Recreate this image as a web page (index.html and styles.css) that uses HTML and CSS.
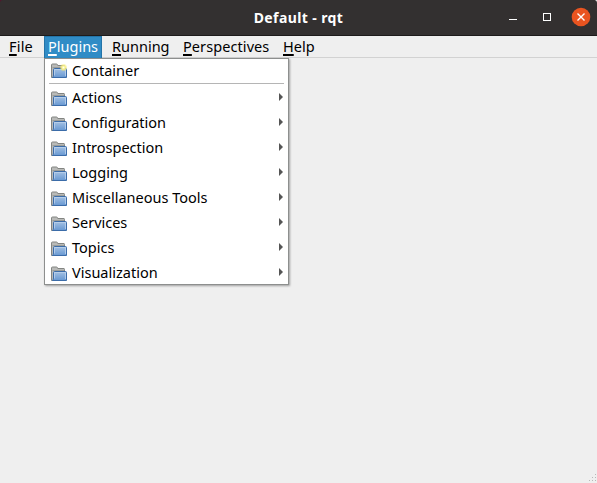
FILE: index.html
```
<!DOCTYPE html>
<html lang="en">
<head>
<meta charset="utf-8">
<title>Default - rqt</title>
<link rel="stylesheet" href="styles.css">
</head>
<body>
<svg class="defs" width="0" height="0" aria-hidden="true">
  <defs>
    <linearGradient id="blue" x1="0" y1="0" x2="0" y2="1"><stop offset="0" stop-color="#a6c2e3"/><stop offset="1" stop-color="#6798d2"/></linearGradient>
    <radialGradient id="glow"><stop offset="0" stop-color="#fffff0"/><stop offset=".45" stop-color="#f6ee86"/><stop offset="1" stop-color="#f4e660" stop-opacity="0"/></radialGradient>
    <symbol id="folder" viewBox="0 0 16 16">
      <path d="M.5 14.500V2Q.5 1 1.500 1H5.500Q6.500 1 6.700 2.500H13Q13.500 2.500 13.500 3.500V14.500Z" fill="#b9bab8" stroke="#838582"/>
      <path d="M1.500 4.500H13" stroke="#9a9c98"/>
      <path d="M3.500 5.500H14.500Q15.500 5.500 15.500 6.500V14.500H1.500Q2.500 13.500 2.500 12V6.500Q2.500 5.500 3.500 5.500Z" fill="url(#blue)" stroke="#3b6ca9"/>
      <path d="M3.500 12.500V6.500H14.500V13" fill="none" stroke="#bcd2ec" stroke-opacity=".8"/>
    </symbol>
    <symbol id="arrow" viewBox="0 0 4 8"><path d="M0 0L4 4L0 8Z" fill="#555"/></symbol>
  </defs>
</svg>
<div class="window">
  <header class="titlebar">
    <h1 class="title">Default - rqt</h1>
    <svg class="controls" width="97" height="35" viewBox="0 0 97 35">
      <path d="M12 19.500H20" stroke="#fff"/>
      <rect x="46.500" y="13.500" width="7" height="7" fill="none" stroke="#fff"/>
      <circle cx="84" cy="17" r="9.300" fill="#e95420"/>
      <path d="M80.500 13.500L87.500 20.500M87.500 13.500L80.500 20.500" stroke="#fff" stroke-width="1.400"/>
    </svg>
  </header>
  <nav class="menubar">
    <span class="top file"><u>F</u>ile</span>
    <span class="top plugins"><u>P</u>lugins</span>
    <span class="top running"><u>R</u>unning</span>
    <span class="top perspectives"><u>P</u>erspectives</span>
    <span class="top help"><u>H</u>elp</span>
  </nav>
  <div class="menu">
    <div class="item first"><svg class="icon"><use href="#folder"/><circle cx="12.500" cy="4.500" r="4" fill="url(#glow)"/></svg><span>Container</span></div>
    <hr class="separator">
    <div class="item"><svg class="icon"><use href="#folder"/></svg><span>Actions</span><svg class="arrow"><use href="#arrow"/></svg></div>
    <div class="item"><svg class="icon"><use href="#folder"/></svg><span>Configuration</span><svg class="arrow"><use href="#arrow"/></svg></div>
    <div class="item"><svg class="icon"><use href="#folder"/></svg><span>Introspection</span><svg class="arrow"><use href="#arrow"/></svg></div>
    <div class="item"><svg class="icon"><use href="#folder"/></svg><span>Logging</span><svg class="arrow"><use href="#arrow"/></svg></div>
    <div class="item"><svg class="icon"><use href="#folder"/></svg><span>Miscellaneous Tools</span><svg class="arrow"><use href="#arrow"/></svg></div>
    <div class="item"><svg class="icon"><use href="#folder"/></svg><span>Services</span><svg class="arrow"><use href="#arrow"/></svg></div>
    <div class="item"><svg class="icon"><use href="#folder"/></svg><span>Topics</span><svg class="arrow"><use href="#arrow"/></svg></div>
    <div class="item"><svg class="icon"><use href="#folder"/></svg><span>Visualization</span><svg class="arrow"><use href="#arrow"/></svg></div>
  </div>
  <svg class="grip" width="9" height="9" fill="#b8b8b8"><path d="M7 0h1v1h-1zM4 3h1v1h-1zM7 3h1v1h-1zM1 6h1v1h-1zM4 6h1v1h-1zM7 6h1v1h-1z"/></svg>
</div>
</body>
</html>
```

FILE: styles.css
```
* { box-sizing: border-box; }
body { margin: 0; background: #efefef; color: #000; font: 14.5px/20px "Noto Sans", "Open Sans", sans-serif; overflow: hidden; }
.defs { position: absolute; }
.window { position: relative; width: 597px; height: 483px; }
.titlebar { position: relative; height: 36px; background: #333030; border-bottom: 1px solid #1d1b1b; border-radius: 3px 3px 0 0; box-shadow: -2px -2px 0 #55162e; }
.title { margin: 0; padding-top: 8px; text-align: center; color: #fff; font-size: 14px; letter-spacing: .4px; line-height: 20px; font-weight: 700; }
.controls { position: absolute; right: 3px; top: 0; }
.menubar { display: flex; height: 22px; padding-left: 5px; border-bottom: 1px solid #d2d2d2; }
.top { height: 22px; padding-left: 4px; line-height: 21px; white-space: nowrap; }
.top u { text-decoration-thickness: 2px; text-underline-offset: 2px; text-decoration-skip-ink: none; }
.file { width: 39px; letter-spacing: .2px; }
.plugins { width: 58px; margin-right: 6px; color: #fff; background: #308cc6; border: 1px solid #2474a8; border-bottom: 0; padding-left: 3px; line-height: 19px; }
.running { width: 71px; }
.perspectives { width: 100px; letter-spacing: .08px; }
.menu { position: absolute; left: 44px; top: 58px; width: 245px; height: 227px; padding: 0 5px; background: #fff; border: 1px solid #8d8f8e; box-shadow: 1px 1px 2px #0005; }
.item { display: flex; align-items: flex-start; height: 25px; padding: 5px 0 0 1px; white-space: nowrap; }
.first { height: 24px; padding-top: 4px; }
.icon { width: 16px; height: 16px; margin-right: 5px; flex: none; }
.item span { margin-top: -4px; }
.first span { margin-top: -3px; }
.arrow { width: 4px; height: 8px; margin: 2px 0 0 auto; }
.separator { width: 235px; height: 1px; margin: 0 0 2px -1px; border: 0; background: #b5b5b5; }
.grip { position: absolute; right: 0; bottom: 0; }
```
